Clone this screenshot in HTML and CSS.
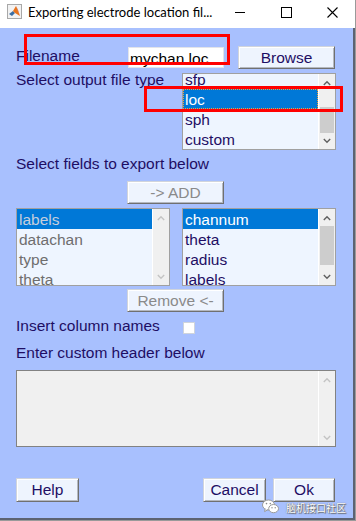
FILE: index.html
```html
<!DOCTYPE html>
<html lang="en">
<head>
  <meta charset="UTF-8" />
  <title>Exporting electrode location file</title>
  <link rel="stylesheet" href="styles.css">
</head>
<body>
  <div class="window">
    <!-- 标题栏 -->
    <div class="titlebar">
      <svg class="app-icon" width="15" height="15" viewBox="0 0 15 15">
        <rect x="0.5" y="0.5" width="14" height="14" fill="#f2f2f2" stroke="#a8a8a8"/>
        <polygon points="2,10 6,7 8,9 5,12" fill="#3a6ea5"/>
        <polygon points="6,7 9,2 13,12 8,9" fill="#e8741c"/>
        <polygon points="9,2 11,6 13,12" fill="#c4301a"/>
      </svg>
      <span class="title">Exporting electrode location fil...</span>
      <div class="controls">
        <span class="ctl">
          <svg width="10" height="10" viewBox="0 0 10 10"><line x1="0" y1="5.5" x2="10" y2="5.5" stroke="#000"/></svg>
        </span>
        <span class="ctl">
          <svg width="11" height="11" viewBox="0 0 11 11"><rect x="0.5" y="0.5" width="10" height="10" fill="none" stroke="#000"/></svg>
        </span>
        <span class="ctl">
          <svg width="11" height="11" viewBox="0 0 11 11"><path d="M0.5 0.5 L10.5 10.5 M10.5 0.5 L0.5 10.5" stroke="#000" stroke-width="1.1"/></svg>
        </span>
      </div>
    </div>

    <div class="client">
      <div class="row row-file">
        <span class="label w-file">Filename</span>
        <div class="edit">mychan.loc</div>
        <button class="btn browse">Browse</button>
      </div>

      <div class="row row-type">
        <span class="label w-type">Select output file type</span>
        <div class="listbox type-list">
          <div class="items shift">
            <div class="item">sfp</div>
            <div class="item selected focus">loc</div>
            <div class="item">sph</div>
            <div class="item">custom</div>
          </div>
          <div class="scrollbar">
            <span class="arrow"><svg width="8" height="6" viewBox="0 0 8 6"><polyline points="0.8,5 4,1.8 7.2,5" fill="none" stroke="#606060" stroke-width="1.4"/></svg></span>
            <span class="thumb thumb-type"></span>
            <span class="arrow arrow-down"><svg width="8" height="6" viewBox="0 0 8 6"><polyline points="0.8,1 4,4.2 7.2,1" fill="none" stroke="#606060" stroke-width="1.4"/></svg></span>
          </div>
        </div>
      </div>

      <div class="label fields-label">Select fields to export below</div>
      <button class="btn btn-mid disabled add">-&gt; ADD</button>

      <div class="row row-lists">
        <div class="listbox field-list">
          <div class="items muted">
            <div class="item selected dim">labels</div>
            <div class="item">datachan</div>
            <div class="item">type</div>
            <div class="item">theta</div>
          </div>
          <div class="scrollbar">
            <span class="arrow"><svg width="8" height="6" viewBox="0 0 8 6"><polyline points="0.8,5 4,1.8 7.2,5" fill="none" stroke="#c4c4c4" stroke-width="1.4"/></svg></span>
            <span class="arrow arrow-down"><svg width="8" height="6" viewBox="0 0 8 6"><polyline points="0.8,1 4,4.2 7.2,1" fill="none" stroke="#c4c4c4" stroke-width="1.4"/></svg></span>
          </div>
        </div>
        <div class="listbox field-list">
          <div class="items">
            <div class="item selected">channum</div>
            <div class="item">theta</div>
            <div class="item">radius</div>
            <div class="item">labels</div>
          </div>
          <div class="scrollbar">
            <span class="arrow"><svg width="8" height="6" viewBox="0 0 8 6"><polyline points="0.8,5 4,1.8 7.2,5" fill="none" stroke="#606060" stroke-width="1.4"/></svg></span>
            <span class="thumb thumb-fields"></span>
            <span class="arrow arrow-down"><svg width="8" height="6" viewBox="0 0 8 6"><polyline points="0.8,1 4,4.2 7.2,1" fill="none" stroke="#606060" stroke-width="1.4"/></svg></span>
          </div>
        </div>
      </div>

      <button class="btn btn-mid disabled remove">Remove &lt;-</button>

      <div class="row row-check">
        <span class="label w-check">Insert column names</span>
        <span class="checkbox"></span>
      </div>

      <div class="label header-label">Enter custom header below</div>
      <div class="textarea">
        <div class="scrollbar">
          <span class="arrow"><svg width="8" height="6" viewBox="0 0 8 6"><polyline points="0.8,5 4,1.8 7.2,5" fill="none" stroke="#c4c4c4" stroke-width="1.4"/></svg></span>
          <span class="arrow arrow-down"><svg width="8" height="6" viewBox="0 0 8 6"><polyline points="0.8,1 4,4.2 7.2,1" fill="none" stroke="#c4c4c4" stroke-width="1.4"/></svg></span>
        </div>
      </div>

      <div class="row row-buttons">
        <button class="btn btn-help">Help</button>
        <button class="btn btn-cancel">Cancel</button>
        <button class="btn btn-ok">Ok</button>
      </div>
    </div>

    <!-- 红框标注 -->
    <div class="mark mark-file"></div>
    <div class="mark mark-type"></div>

    <!-- 水印 -->
    <div class="watermark">
      <svg width="17" height="15" viewBox="0 0 17 15">
        <ellipse cx="6.5" cy="6" rx="6" ry="5" fill="#fff" stroke="#9a9a9a"/>
        <path d="M3.2 9.8 L2.6 12.6 L5.8 10.7" fill="#fff" stroke="#9a9a9a"/>
        <ellipse cx="11.6" cy="9.6" rx="4.9" ry="4.1" fill="#fff" stroke="#9a9a9a"/>
        <circle cx="4.5" cy="4.6" r="0.8" fill="#8a8a8a"/>
        <circle cx="8.3" cy="4.6" r="0.8" fill="#8a8a8a"/>
        <circle cx="10" cy="8.8" r="0.7" fill="#8a8a8a"/>
        <circle cx="13.2" cy="8.8" r="0.7" fill="#8a8a8a"/>
      </svg>
      <span class="wm-text">脑机接口社区</span>
    </div>
  </div>
</body>
</html>
```

FILE: styles.css
```css
/* 公用样式 */
* {
  box-sizing: border-box;
  margin: 0;
  padding: 0;
}
body {
  font-family: "Liberation Sans", Arial, sans-serif;
  font-size: 15.5px;
  background: #fff;
}

.window {
  position: relative;
  width: 356px;
  height: 521px;
  display: flex;
  flex-direction: column;
  border-right: 1px solid #9a9a9a;
  border-bottom: 1px solid #9a9a9a;
}

/* 标题栏 */
.titlebar {
  height: 28px;
  background: #fff;
  display: flex;
  align-items: flex-start;
}
.app-icon {
  margin: 4px 0 0 7px;
}
.title {
  margin: 4px 0 0 6px;
  font-family: Lato, "Liberation Sans", sans-serif;
  font-size: 13px;
  line-height: 17px;
  color: #000;
  white-space: nowrap;
}
.controls {
  margin-left: auto;
  display: flex;
}
.ctl {
  width: 46px;
  height: 24px;
  display: flex;
  align-items: center;
  justify-content: center;
}

/* 主体区域 */
.client {
  flex: 1;
  background: #a8c0fe;
  border-right: 2px solid #5c6272;
  border-bottom: 2px solid #5c6272;
  padding-left: 16px;
  display: flex;
  flex-direction: column;
  color: #1e0e64;
}
.row {
  display: flex;
  align-items: flex-start;
}
.label {
  line-height: 16px;
  white-space: nowrap;
}

.row-file {
  margin-top: 18px;
  height: 23px;
}
.w-file {
  width: 112px;
  margin-top: 2px;
}
.edit {
  width: 96px;
  height: 21px;
  margin-top: 1px;
  background: #fff;
  border: 1px solid #e2e4ea;
  color: #000;
  line-height: 19px;
  padding: 1px 0 0 1px;
  overflow: hidden;
  white-space: nowrap;
}

/* 按钮 */
.btn {
  font: inherit;
  color: #1e0e64;
  background: #eef4fe;
  border: 1px solid;
  border-color: #d0d4dc #707070 #707070 #d0d4dc;
  box-shadow: inset 1px 1px #fff, inset -1px -1px #b4b8c0;
  height: 23px;
  line-height: 20px;
  text-align: center;
}
.btn.disabled {
  color: #8a8a8a;
}
.browse {
  width: 97px;
  margin-left: 14px;
}
.btn-mid {
  width: 97px;
  margin-left: 111px;
  align-self: flex-start;
}
.add {
  margin-top: 9px;
}
.remove {
  margin-top: 3px;
}

/* 列表框 */
.row-type {
  margin-top: 4px;
}
.w-type {
  width: 166px;
  margin-top: -1px;
}
.listbox {
  width: 154px;
  height: 77px;
  border: 1px solid #a0a0a0;
  background: #eef5ff;
  display: flex;
  overflow: hidden;
}
.items {
  flex: 1;
  overflow: hidden;
}
.shift {
  margin-top: -5px;
}
.item {
  height: 20px;
  line-height: 20px;
  padding: 1px 0 0 2px;
  white-space: nowrap;
}
.selected {
  background: #0078d7;
  color: #fff;
}
.focus {
  outline: 1px dotted #f0a040;
  outline-offset: -1px;
}
.muted {
  color: #6e6e6e;
}
.selected.dim {
  color: #c6cedc;
}

.scrollbar {
  width: 17px;
  background: #f0f0f0;
  border-left: 1px solid #fff;
  display: flex;
  flex-direction: column;
}
.arrow {
  height: 17px;
  display: flex;
  align-items: center;
  justify-content: center;
}
.arrow-down {
  margin-top: auto;
  height: 16px;
}
.thumb {
  background: #cdcdcd;
  margin: 0 1px;
}
.thumb-type {
  margin-top: 16px;
  height: 26px;
}
.thumb-fields {
  height: 39px;
}

.fields-label {
  margin-top: 6px;
}
.row-lists {
  margin-top: 4px;
  gap: 12px;
}
.field-list {
  height: 78px;
}

/* 复选框 */
.row-check {
  margin-top: 6px;
  height: 16px;
}
.w-check {
  width: 167px;
}
.checkbox {
  width: 12px;
  height: 12px;
  margin-top: 4px;
  background: #fff;
  border: 1px solid #cfd4dc;
}

.header-label {
  margin-top: 11px;
}
.textarea {
  margin-top: 9px;
  width: 320px;
  height: 77px;
  border: 1px solid #828282;
  background: #f0f0f0;
  display: flex;
  justify-content: flex-end;
}

/* 底部按钮 */
.row-buttons {
  margin-top: 31px;
}
.row-buttons .btn {
  height: 24px;
}
.btn-help {
  width: 63px;
}
.btn-cancel {
  width: 63px;
  margin-left: 124px;
}
.btn-ok {
  width: 62px;
  margin-left: 7px;
}

/* 红框标注 */
.mark {
  position: absolute;
  border: 3px solid #ff0000;
}
.mark-file {
  left: 24px;
  top: 34px;
  width: 206px;
  height: 31px;
}
.mark-type {
  left: 144px;
  top: 86px;
  width: 199px;
  height: 26px;
}

/* 水印 */
.watermark {
  position: absolute;
  left: 262px;
  top: 497px;
  display: flex;
  align-items: center;
  gap: 7px;
}
.wm-text {
  font-family: "Noto Sans CJK SC", sans-serif;
  font-size: 10px;
  color: #fff;
  text-shadow: 0 0 1px #555, 1px 1px 1px #666;
  margin-top: 3px;
}
```
